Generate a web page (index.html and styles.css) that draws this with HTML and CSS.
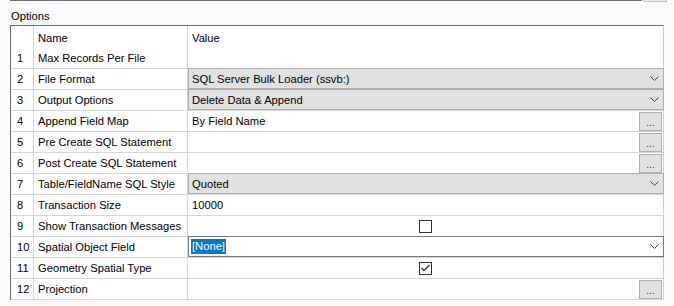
FILE: index.html
```html
<!DOCTYPE html>
<html lang="en">
  <head>
    <meta charset="UTF-8" />
    <meta name="viewport" content="width=device-width, initial-scale=1.0" />
    <title>Options</title>
    <link rel="stylesheet" href="styles.css">
  </head>
  <body>
    <div class="topbar">
      <div class="topline"></div>
      <div class="topbtn"></div>
    </div>
    <div class="caption">Options</div>

    <div class="grid">
      <div class="row head">
        <div class="num"></div>
        <div class="name">Name</div>
        <div class="val">Value</div>
      </div>

      <div class="row">
        <div class="num">1</div>
        <div class="name">Max Records Per File</div>
        <div class="val"></div>
      </div>

      <div class="row">
        <div class="num">2</div>
        <div class="name">File Format</div>
        <div class="val combo">
          <span>SQL Server Bulk Loader (ssvb:)</span>
          <svg class="chev" width="9" height="5" viewBox="0 0 9 5"><polyline points="0.5,0.5 4.5,4.5 8.5,0.5" /></svg>
        </div>
      </div>

      <div class="row">
        <div class="num">3</div>
        <div class="name">Output Options</div>
        <div class="val combo">
          <span>Delete Data &amp; Append</span>
          <svg class="chev" width="9" height="5" viewBox="0 0 9 5"><polyline points="0.5,0.5 4.5,4.5 8.5,0.5" /></svg>
        </div>
      </div>

      <div class="row">
        <div class="num">4</div>
        <div class="name">Append Field Map</div>
        <div class="val">
          <span>By Field Name</span>
          <button class="dots">...</button>
        </div>
      </div>

      <div class="row">
        <div class="num">5</div>
        <div class="name">Pre Create SQL Statement</div>
        <div class="val">
          <span></span>
          <button class="dots">...</button>
        </div>
      </div>

      <div class="row">
        <div class="num">6</div>
        <div class="name">Post Create SQL Statement</div>
        <div class="val">
          <span></span>
          <button class="dots">...</button>
        </div>
      </div>

      <div class="row">
        <div class="num">7</div>
        <div class="name">Table/FieldName SQL Style</div>
        <div class="val combo">
          <span>Quoted</span>
          <svg class="chev" width="9" height="5" viewBox="0 0 9 5"><polyline points="0.5,0.5 4.5,4.5 8.5,0.5" /></svg>
        </div>
      </div>

      <div class="row">
        <div class="num">8</div>
        <div class="name">Transaction Size</div>
        <div class="val">10000</div>
      </div>

      <div class="row">
        <div class="num">9</div>
        <div class="name">Show Transaction Messages</div>
        <div class="val center">
          <span class="check"></span>
        </div>
      </div>

      <div class="row">
        <div class="num">10</div>
        <div class="name">Spatial Object Field</div>
        <div class="val combo editing">
          <span class="selected">[None]</span>
          <svg class="chev" width="9" height="5" viewBox="0 0 9 5"><polyline points="0.5,0.5 4.5,4.5 8.5,0.5" /></svg>
        </div>
      </div>

      <div class="row">
        <div class="num">11</div>
        <div class="name">Geometry Spatial Type</div>
        <div class="val center">
          <span class="check">
            <svg width="11" height="11" viewBox="0 0 11 11"><polyline points="1.5,5 4,7.5 9.5,2" /></svg>
          </span>
        </div>
      </div>

      <div class="row">
        <div class="num">12</div>
        <div class="name">Projection</div>
        <div class="val">
          <span></span>
          <button class="dots">...</button>
        </div>
      </div>
    </div>
  </body>
</html>
```

FILE: styles.css
```css
body {
  margin: 0;
  background: #f9fafc;
  font-family: "Liberation Sans", Arial, sans-serif;
  font-size: 11.2px;
  color: #000;
}

/* strip at the very top, cut off */
.topbar {
  display: flex;
  height: 2px;
  padding-left: 10px;
}
.topline {
  flex: 1;
  border-top: 1px solid #6e6e6e;
}
.topbtn {
  width: 22px;
  height: 1px;
  margin-left: 1px;
  margin-right: 7px;
  border: 1px solid #c2c2c2;
  border-top: none;
  background: #eeeeee;
}

.caption {
  height: 23px;
  line-height: 28px;
  padding-left: 11px;
  box-sizing: border-box;
}

.grid {
  margin-left: 10px;
  width: 654px;
  box-sizing: border-box;
  background: #fff;
  border-left: 1px solid #696969;
  border-top: 1px solid #696969;
  border-right: 1px solid #cfcfcf;
}

.row {
  display: grid;
  grid-template-columns: 23px 154px 1fr;
  height: 21px;
  box-sizing: border-box;
  border-bottom: 1px solid #d6d6d6;
}
.row.head {
  height: 22px;
  border-bottom: none;
}

.row > div {
  display: flex;
  align-items: center;
  box-sizing: border-box;
  white-space: nowrap;
}

.num {
  padding-left: 6px;
  border-right: 1px solid #d6d6d6;
}
.name {
  padding-left: 4px;
  border-right: 1px solid #d6d6d6;
}
.val {
  padding-left: 4px;
  justify-content: space-between;
}
.head .name,
.head .val {
  padding-top: 2px;
}

.val.combo {
  background: #e1e1e1;
  border: 1px solid #adadad;
  margin-right: -1px;
  margin-top: -1px;
  height: 21px;
  padding-left: 3px;
  padding-right: 4px;
}
.chev {
  fill: none;
  stroke: #444;
  stroke-width: 1;
}

.val.editing {
  background: #fff;
  border-color: #7a7a7a;
  padding-left: 2px;
}
.selected {
  background: #0078d7;
  color: #fff;
  padding: 1px 1px 2px 1px;
}

.dots {
  width: 23px;
  height: 19px;
  margin-right: 1px;
  padding: 0 0 2px 0;
  background: #e1e1e1;
  border: 1px solid #adadad;
  font: inherit;
  font-size: 10px;
  line-height: 1;
  display: flex;
  align-items: flex-end;
  justify-content: center;
  color: #333;
}

.val.center {
  justify-content: center;
  padding-left: 0;
}
.check {
  width: 13px;
  height: 13px;
  box-sizing: border-box;
  border: 1px solid #333;
  background: #fff;
  display: flex;
  align-items: center;
  justify-content: center;
}
.check svg {
  fill: none;
  stroke: #333;
  stroke-width: 1.3;
}
```
